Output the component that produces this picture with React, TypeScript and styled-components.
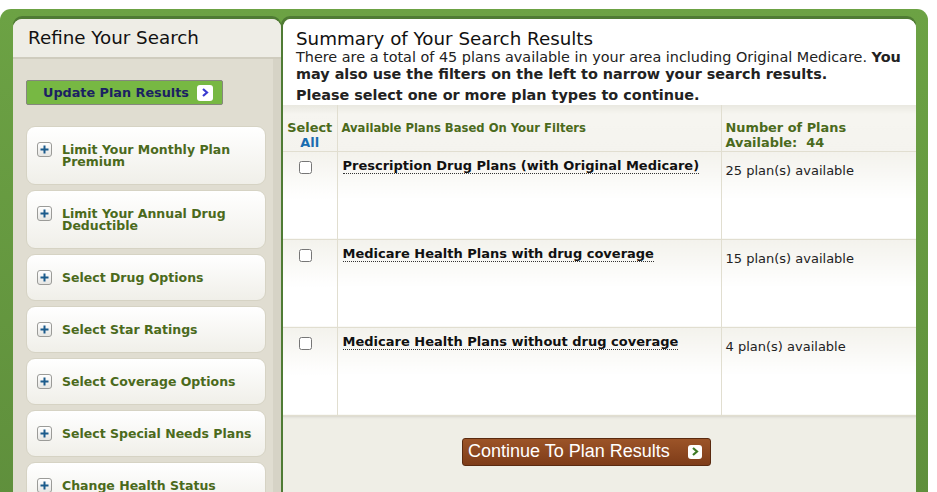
import { createGlobalStyle, styled } from "styled-components";

const GlobalStyle = createGlobalStyle`
  html, body {
    margin: 0;
    padding: 0;
    background: #ffffff;
    overflow: hidden;
  }
  body {
    font-family: "DejaVu Sans", Verdana, sans-serif;
    color: #111;
  }
`;

const FILTERS = [
  "Limit Your Monthly Plan Premium",
  "Limit Your Annual Drug Deductible",
  "Select Drug Options",
  "Select Star Ratings",
  "Select Coverage Options",
  "Select Special Needs Plans",
  "Change Health Status",
];

const PLANS = [
  { name: "Prescription Drug Plans (with Original Medicare)", count: 25 },
  { name: "Medicare Health Plans with drug coverage", count: 15 },
  { name: "Medicare Health Plans without drug coverage", count: 4 },
];

const Frame = styled.div`
  margin-top: 9px;
  width: 928px;
  min-height: 483px;
  box-sizing: border-box;
  padding: 10px 12px 0 13px;
  border-radius: 11px 11px 0 0;
  background: linear-gradient(#6ca244, #5f8f3c);
  display: grid;
  grid-template-columns: 268px 635px;
  align-items: stretch;
`;

const SidePanel = styled.aside`
  display: flex;
  flex-direction: column;
  border-radius: 9px 9px 0 0;
  background: #e0ddd1;
  box-shadow: inset -8px 0 0 #d6d3c6, 0 -3px 0 #4f7b34;
  overflow: hidden;
`;

const SideHeader = styled.h2`
  margin: 0;
  height: 40px;
  box-sizing: border-box;
  padding: 8px 0 0 15px;
  background: #eeede6;
  border-bottom: 2px solid #cfccbe;
  font-size: 18.3px;
  font-weight: normal;
  color: #111;
`;

const SideBody = styled.div`
  display: flex;
  flex-direction: column;
  padding: 21px 15px 0 13px;
`;

const UpdateButton = styled.button`
  display: flex;
  align-items: center;
  gap: 8px;
  width: 197px;
  height: 25px;
  box-sizing: border-box;
  padding: 0 0 0 16px;
  border: 1px solid #85877d;
  border-radius: 2px;
  background: #77b843;
  font-family: "DejaVu Sans", Verdana, sans-serif;
  font-size: 12.8px;
  font-weight: bold;
  color: #1b2162;
`;

const ArrowIcon = styled.span<{ $size: number }>`
  display: inline-flex;
  align-items: center;
  justify-content: center;
  width: ${(p) => p.$size}px;
  height: ${(p) => p.$size}px;
  background: #fff;
  border-radius: 3px;
`;

const FilterList = styled.div`
  display: flex;
  flex-direction: column;
  gap: 5px;
  margin-top: 21px;
`;

const FilterItem = styled.div`
  display: flex;
  align-items: flex-start;
  gap: 10px;
  width: 240px;
  box-sizing: border-box;
  padding: 17px 8px 16px 10px;
  border: 1px solid #d6d3c4;
  border-radius: 9px;
  background: linear-gradient(#ffffff, #f0efe9);
`;

const PlusBox = styled.span`
  flex: none;
  display: inline-flex;
  align-items: center;
  justify-content: center;
  width: 15px;
  height: 15px;
  margin: -2px 0 -2px 0;
  box-sizing: border-box;
  border: 1px solid #9b9b98;
  border-radius: 3px;
  background: linear-gradient(#ffffff, #e6e6e3);
`;

const FilterLabel = styled.span`
  display: block;
  font-size: 12.5px;
  line-height: 12px;
  font-weight: bold;
  color: #4b6a1c;
`;

const MainPanel = styled.main`
  display: flex;
  flex-direction: column;
  border-left: 2px solid #4f7b34;
  border-radius: 9px 9px 0 0;
  background: #efeee6;
  box-shadow: 0 -3px 0 #4f7b34;
  overflow: hidden;
`;

const Summary = styled.section`
  background: #fff;
  padding: 9px 8px 0 13px;
  height: 86px;
  box-sizing: border-box;
`;

const SummaryTitle = styled.h1`
  margin: 0;
  font-size: 18.3px;
  line-height: 21px;
  font-weight: normal;
  color: #111;
`;

const SummaryText = styled.p`
  margin: 0;
  font-size: 14.4px;
  line-height: 17px;
  color: #222;
  & + & {
    margin-top: 4px;
  }
`;

const PlanTable = styled.table`
  width: 100%;
  border-collapse: collapse;
  background: #fff;
  box-shadow: 0 2px 2px rgba(0, 0, 0, 0.06);
`;

const HeadCell = styled.th<{ $width: number; $center?: boolean }>`
  width: ${(p) => p.$width}px;
  height: 46px;
  box-sizing: border-box;
  padding: 15px 4px 0 4px;
  vertical-align: top;
  text-align: ${(p) => (p.$center ? "center" : "left")};
  background: linear-gradient(#e9e8e0, #f6f5f0 20%, #f4f3ee);
  border-left: 1px solid #e1ded0;
  border-bottom: 1px solid #e1ded0;
  font-size: 12.9px;
  line-height: 15px;
  color: #4b6a1c;
  &:first-child {
    border-left: none;
  }
`;

const SmallHead = styled.span`
  font-size: 11.6px;
`;

const SelectAll = styled.span`
  color: #1a6db0;
`;

const Cell = styled.td<{ $checkCol?: boolean }>`
  height: 88px;
  box-sizing: border-box;
  padding: ${(p) => (p.$checkCol ? "6px 0 0 16px" : "6px 4px 0 4px")};
  vertical-align: top;
  text-align: left;
  background: linear-gradient(#f3f2ec, #ffffff 55%);
  border-left: 1px solid #e1ded0;
  border-bottom: 1px solid #e1ded0;
  font-size: 13px;
  color: #111;
  &:first-child {
    border-left: none;
  }
`;

const Check = styled.input`
  display: block;
  width: 13px;
  height: 13px;
  margin: 3px 0 0 0;
`;

const PlanName = styled.span`
  display: inline-block;
  margin-left: 1px;
  font-weight: bold;
  font-size: 13px;
  line-height: 15px;
  border-bottom: 1px dotted #333;
`;

const PlanCount = styled.span`
  display: inline-block;
  margin-top: 5px;
  font-size: 13px;
  color: #222;
`;

const Footer = styled.div`
  display: flex;
  justify-content: center;
  padding: 21px 26px 0 0;
  border-top: 1px solid #dedcd2;
`;

const ContinueButton = styled.button`
  display: flex;
  align-items: center;
  gap: 18px;
  width: 249px;
  height: 28px;
  box-sizing: border-box;
  padding: 0 0 0 5px;
  border: 1px solid #5a2a10;
  border-radius: 3px;
  background: linear-gradient(#9c5428, #7e3c19);
  font-family: "Liberation Sans", Arial, sans-serif;
  font-size: 18px;
  color: #fff;
`;

const Chevron = ({ color }: { color: string }) => (
  <svg width="8" height="9" viewBox="0 0 8 9">
    <path d="M2 1 L6 4.5 L2 8" fill="none" stroke={color} strokeWidth="2.2" />
  </svg>
);

const Plus = () => (
  <svg width="9" height="9" viewBox="0 0 9 9">
    <path d="M4.5 0.5 V8.5 M0.5 4.5 H8.5" stroke="#1b5b8c" strokeWidth="2" />
  </svg>
);

export default function App() {
  return (
    <>
      <GlobalStyle />
      <Frame>
        <SidePanel>
          <SideHeader>Refine Your Search</SideHeader>
          <SideBody>
            <UpdateButton>
              Update Plan Results
              <ArrowIcon $size={16}>
                <Chevron color="#3b3bd0" />
              </ArrowIcon>
            </UpdateButton>
            <FilterList>
              {FILTERS.map((label) => (
                <FilterItem key={label}>
                  <PlusBox>
                    <Plus />
                  </PlusBox>
                  <FilterLabel>{label}</FilterLabel>
                </FilterItem>
              ))}
            </FilterList>
          </SideBody>
        </SidePanel>

        <MainPanel>
          <Summary>
            <SummaryTitle>Summary of Your Search Results</SummaryTitle>
            <SummaryText>
              There are a total of 45 plans available in your area including Original Medicare.{" "}
              <b>You may also use the filters on the left to narrow your search results.</b>
            </SummaryText>
            <SummaryText>
              <b>Please select one or more plan types to continue.</b>
            </SummaryText>
          </Summary>

          <PlanTable>
            <thead>
              <tr>
                <HeadCell $width={54} $center>
                  Select
                  <br />
                  <SelectAll>All</SelectAll>
                </HeadCell>
                <HeadCell $width={384}>
                  <SmallHead>Available Plans Based On Your Filters</SmallHead>
                </HeadCell>
                <HeadCell $width={195}>
                  Number of Plans
                  <br />
                  Available:&nbsp; 44
                </HeadCell>
              </tr>
            </thead>
            <tbody>
              {PLANS.map((plan) => (
                <tr key={plan.name}>
                  <Cell $checkCol>
                    <Check type="checkbox" />
                  </Cell>
                  <Cell>
                    <PlanName>{plan.name}</PlanName>
                  </Cell>
                  <Cell>
                    <PlanCount>{plan.count} plan(s) available</PlanCount>
                  </Cell>
                </tr>
              ))}
            </tbody>
          </PlanTable>

          <Footer>
            <ContinueButton>
              Continue To Plan Results
              <ArrowIcon $size={14}>
                <Chevron color="#3d7a25" />
              </ArrowIcon>
            </ContinueButton>
          </Footer>
        </MainPanel>
      </Frame>
    </>
  );
}
